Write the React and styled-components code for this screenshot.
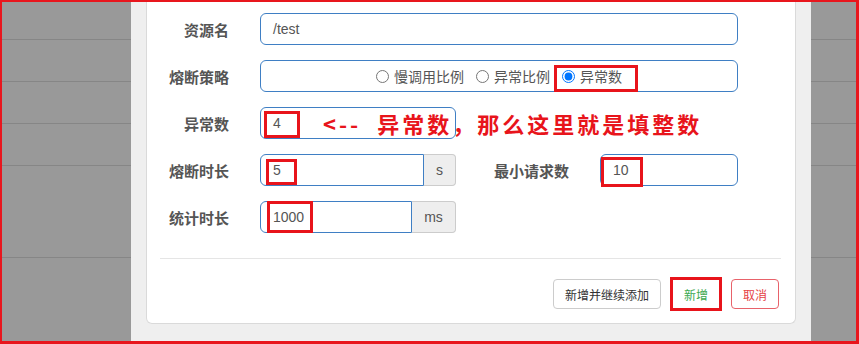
import React from "react";
import styled, { createGlobalStyle, css } from "styled-components";

const Global = createGlobalStyle`
  html, body { margin: 0; padding: 0; background: #fff; }
  body { font-family: "Liberation Sans", "Noto Sans CJK SC", sans-serif; }
`;

const Shot = styled.div`
  width: 859px;
  height: 344px;
  box-sizing: border-box;
  border-style: solid;
  border-color: #e8161d;
  border-width: 2px 3px 3px 2px;
  display: flex;
  overflow: hidden;
`;

const Backdrop = styled.div`
  width: ${(p) => p.$w}px;
  flex: none;
  background: #999999;
  display: flex;
  flex-direction: column;
`;

const BackRow = styled.div`
  height: ${(p) => p.$h}px;
  flex: none;
  box-sizing: border-box;
  border-bottom: 1px solid #868686;
`;

const Frame = styled.div`
  width: 680px;
  flex: none;
  box-sizing: border-box;
  background: #efefef;
  padding: 0 15px 17px;
  display: flex;
`;

const Card = styled.div`
  flex: 1;
  background: #fff;
  border: 1px solid #dadada;
  border-top: none;
  border-radius: 0 0 6px 6px;
  padding: 11px 0 14px;
  display: flex;
  flex-direction: column;
`;

const Form = styled.div`
  display: flex;
  flex-direction: column;
  gap: 15px;
  padding-right: 57px;
`;

const Row = styled.div`
  position: relative;
  display: flex;
  align-items: center;
  height: 32px;
`;

const Label = styled.div`
  flex: none;
  width: ${(p) => (p.$w ? p.$w : 82)}px;
  margin-left: ${(p) => p.$ml || 0}px;
  margin-right: ${(p) => (p.$mr != null ? p.$mr : 31)}px;
  text-align: ${(p) => (p.$w ? "left" : "right")};
  font-size: 15px;
  font-weight: bold;
  color: #555;
  white-space: nowrap;
`;

const Field = styled.div`
  position: relative;
  box-sizing: border-box;
  height: 32px;
  width: ${(p) => (p.$w ? `${p.$w}px` : "auto")};
  flex: ${(p) => (p.$w ? "none" : "1")};
  border: 1px solid #3f7fc4;
  border-radius: ${(p) => (p.$addon ? "6px 0 0 6px" : "6px")};
  padding: 0 12px;
  display: flex;
  align-items: center;
  justify-content: ${(p) => (p.$center ? "center" : "flex-start")};
  font-size: 14px;
  color: #555;
`;

const Group = styled.div`
  display: flex;
  flex: none;
  width: 196px;
`;

const Addon = styled.div`
  flex: 1;
  height: 32px;
  box-sizing: border-box;
  border: 1px solid #cccccc;
  border-left: none;
  border-radius: 0 4px 4px 0;
  background: #eeeeee;
  color: #555;
  font-size: 14px;
  display: flex;
  align-items: center;
  justify-content: center;
`;

const Mark = styled.span`
  position: absolute;
  box-sizing: border-box;
  left: ${(p) => p.$l}px;
  top: ${(p) => p.$t}px;
  width: ${(p) => p.$w}px;
  height: ${(p) => p.$h}px;
  border: 3px solid #e8141b;
  pointer-events: none;
`;

const Option = styled.label`
  position: relative;
  display: inline-flex;
  align-items: center;
  height: 20px;
  font-size: 14px;
  color: #555;
  & + & {
    margin-left: 12px;
  }
`;

const Radio = styled.input`
  width: 13px;
  height: 13px;
  margin: 0 5px 0 0;
`;

const Note = styled.div`
  position: absolute;
  left: 176px;
  top: 50%;
  transform: translateY(-50%);
  font-family: "Noto Sans CJK SC", sans-serif;
  font-size: 22px;
  line-height: 1;
  font-weight: bold;
  color: #e8141b;
  letter-spacing: 3px;
  white-space: pre;
`;

const Divider = styled.div`
  height: 1px;
  background: #e5e5e5;
  margin: 25px 14px 0 13px;
`;

const Actions = styled.div`
  display: flex;
  justify-content: flex-end;
  gap: 11px;
  margin-top: 20px;
  padding-right: 16px;
`;

const Button = styled.button`
  height: 30px;
  padding: 0 11px;
  font-family: inherit;
  font-size: 12px;
  background: #fff;
  color: ${(p) => p.$color};
  border: 1px solid ${(p) => p.$border};
  border-radius: 4px;
  ${(p) =>
    p.$marked &&
    css`
      border-radius: 0;
      outline: 3px solid #e8141b;
      outline-offset: -1px;
    `}
`;

const lines = [38, 42, 42, 42, 92];

function Side({ w }) {
  return (
    <Backdrop $w={w}>
      {lines.map((h, i) => (
        <BackRow key={i} $h={h} />
      ))}
    </Backdrop>
  );
}

export default function App() {
  return (
    <>
      <Global />
      <Shot>
        <Side w={129} />
        <Frame>
          <Card>
            <Form>
              <Row>
                <Label>资源名</Label>
                <Field>/test</Field>
              </Row>
              <Row>
                <Label>熔断策略</Label>
                <Field $center>
                  <Option>
                    <Radio type="radio" name="grade" readOnly />
                    慢调用比例
                  </Option>
                  <Option>
                    <Radio type="radio" name="grade" readOnly />
                    异常比例
                  </Option>
                  <Option>
                    <Radio type="radio" name="grade" defaultChecked />
                    异常数
                    <Mark $l={-8} $t={-1} $w={84} $h={27} />
                  </Option>
                </Field>
              </Row>
              <Row>
                <Label>异常数</Label>
                <Field $w={196}>
                  4
                  <Mark $l={3} $t={3} $w={36} $h={27} />
                </Field>
                <Note>{"<--  异常数，那么这里就是填整数"}</Note>
              </Row>
              <Row>
                <Label>熔断时长</Label>
                <Group>
                  <Field $w={164} $addon>
                    5
                    <Mark $l={5} $t={4} $w={31} $h={26} />
                  </Field>
                  <Addon>s</Addon>
                </Group>
                <Label $w={77} $ml={38} $mr={29}>
                  最小请求数
                </Label>
                <Field>
                  10
                  <Mark $l={0} $t={2} $w={42} $h={30} />
                </Field>
              </Row>
              <Row>
                <Label>统计时长</Label>
                <Group>
                  <Field $w={152} $addon>
                    1000
                    <Mark $l={6} $t={-1} $w={46} $h={32} />
                  </Field>
                  <Addon>ms</Addon>
                </Group>
              </Row>
            </Form>
            <Divider />
            <Actions>
              <Button $color="#333" $border="#cccccc">
                新增并继续添加
              </Button>
              <Button $color="#3da94f" $border="#ffffff" $marked>
                新增
              </Button>
              <Button $color="#e53f45" $border="#e8626a">
                取消
              </Button>
            </Actions>
          </Card>
        </Frame>
        <Side w={45} />
      </Shot>
    </>
  );
}
